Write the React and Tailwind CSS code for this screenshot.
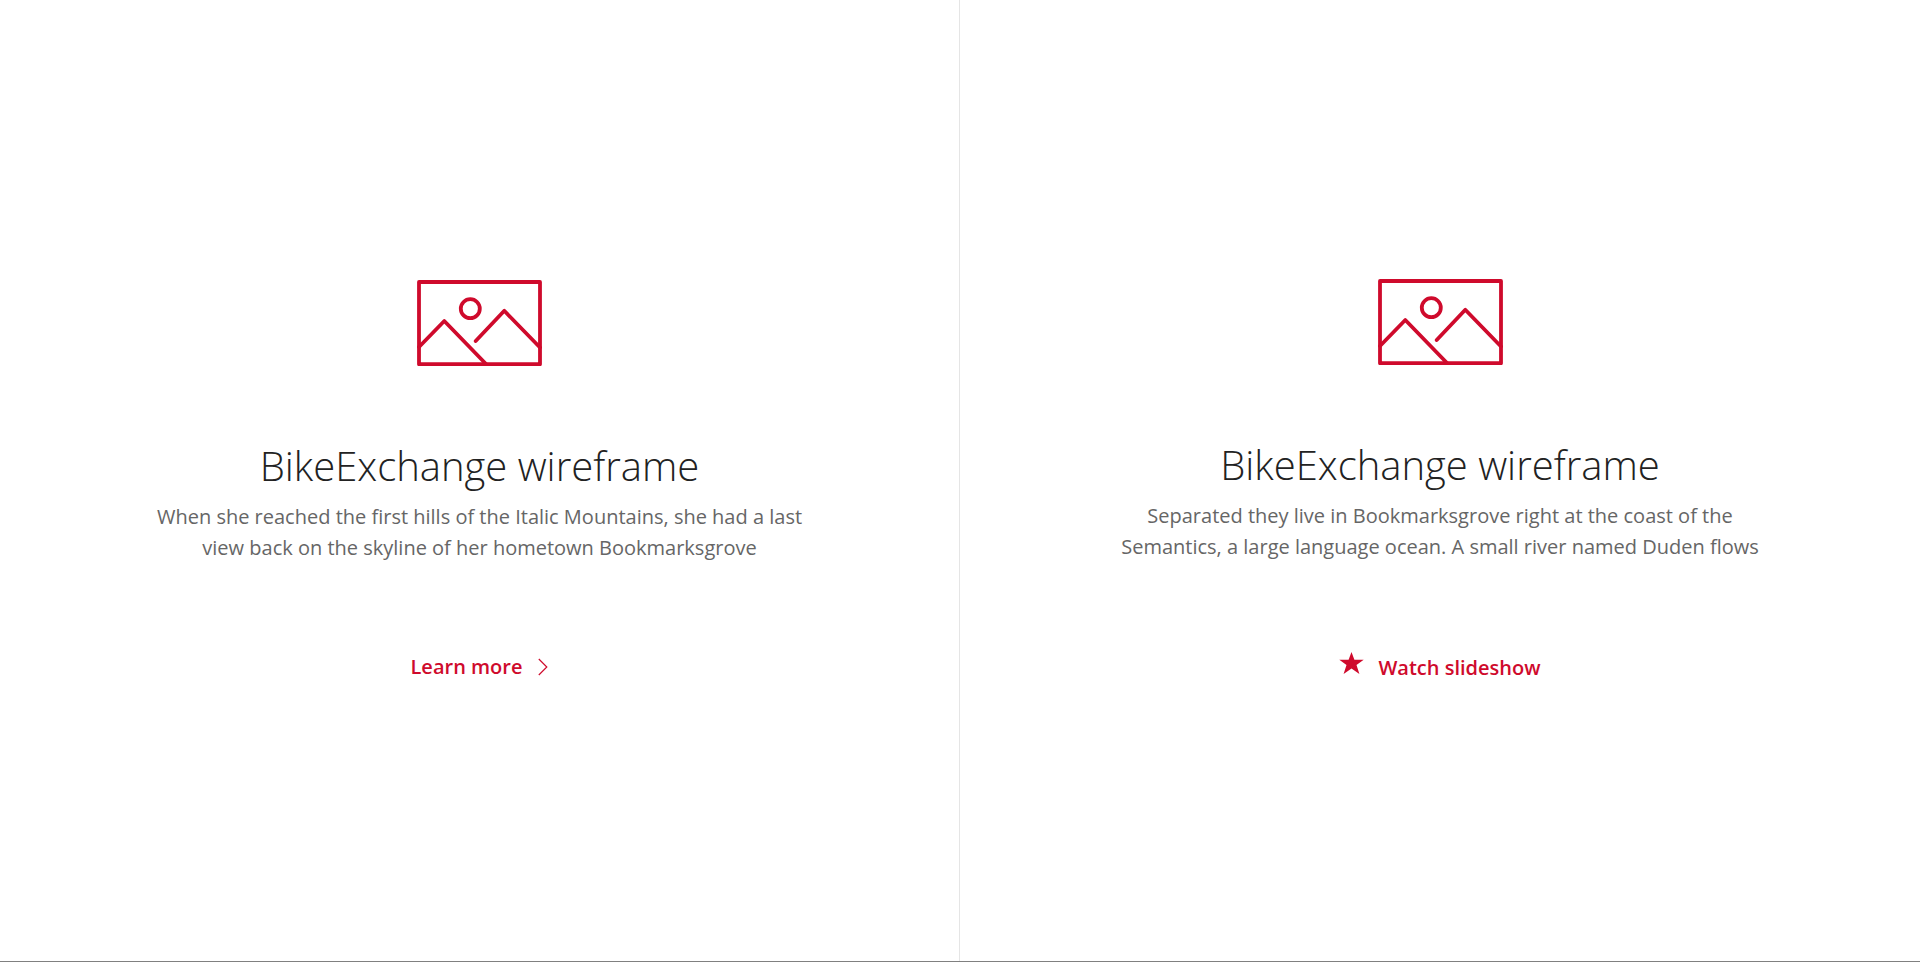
import * as React from "react";

export default function App(){
  return (
    <main className="grid min-h-screen grid-cols-2 border-b border-[#808080] bg-white font-['Open_Sans',sans-serif]">
      <Panel className="border-r border-[#e5e5e5]" title="BikeExchange wireframe" link={<>Learn more<Chevron/></>}>
        When she reached the first hills of the Italic Mountains, she had a last view back on the skyline of her hometown Bookmarksgrove
      </Panel>
      <Panel title="BikeExchange wireframe" link={<><Star/>Watch slideshow</>}>
        Separated they live in Bookmarksgrove right at the coast of the Semantics, a large language ocean. A small river named Duden flows
      </Panel>
    </main>
  );
}

function Panel({title,link,children,className=""}){
  return (
    <section className={`flex flex-col items-center justify-center px-8 text-center ${className}`}>
      <Picture/>
      <h2 className="mt-18 text-[40px] leading-14 font-light text-[#222]">{title}</h2>
      <p className="mt-[7px] max-w-[660px] text-[20px] leading-[31px] text-[#666]">{children}</p>
      <a href="#" className="mt-[90px] flex items-end text-[20px] leading-7 font-semibold text-[#cf0a2c]">{link}</a>
    </section>
  );
}

function Picture(){
  return (
    <svg className="h-[86px] w-[125px] text-[#cf0a2c]" viewBox="0 0 125 86" fill="none" stroke="currentColor" strokeWidth="3.8" strokeLinecap="round" strokeLinejoin="round" aria-hidden="true">
      <path d="M2 2h121v82.2H2z"/>
      <circle cx="53.3" cy="28.7" r="9.5"/>
      <path d="M2 67 27.3 41 69 84M58.7 61 87.3 30.8 123 67.5"/>
    </svg>
  );
}

function Chevron(){
  return (
    <svg className="ml-4 h-7 w-[10px]" viewBox="0 0 10 28" fill="none" stroke="currentColor" strokeWidth="1.2" aria-hidden="true">
      <path d="m.8 6 8 8-8 8"/>
    </svg>
  );
}

function Star(){
  return (
    <svg className="mr-[14px] h-[30px] w-[25px]" viewBox="0 0 25 30" fill="currentColor" aria-hidden="true">
      <path d="m12.5 0 2.9 7.7h9.3l-7.2 5.4 2.9 8.9-7.9-5.5L4.6 22l2.9-8.9L.3 7.7h9.3z"/>
    </svg>
  );
}
